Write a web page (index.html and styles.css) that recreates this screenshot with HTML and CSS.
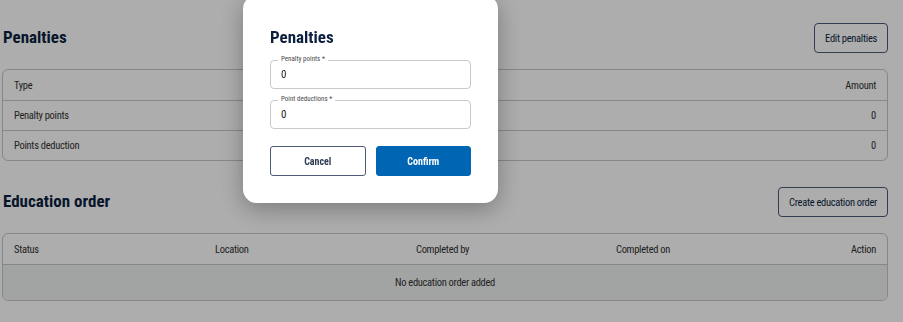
FILE: index.html
```html
<!DOCTYPE html>
<html lang="en">
<head>
    <meta charset="UTF-8">
    <meta name="viewport" content="width=device-width,initial-scale=1.0">
    <title>Penalties</title>
    <link rel="stylesheet" href="styles.css">
</head>
<body>
    <div class="page">

        <div class="section-head">
            <h2>Penalties</h2>
            <button class="btn-outline">Edit penalties</button>
        </div>
        <div class="table">
            <div class="row head penalty-row">
                <span>Type</span>
                <span class="right">Amount</span>
            </div>
            <div class="row penalty-row">
                <span>Penalty points</span>
                <span class="right">0</span>
            </div>
            <div class="row penalty-row">
                <span>Points deduction</span>
                <span class="right">0</span>
            </div>
        </div>

        <div class="section-head second">
            <h2>Education order</h2>
            <button class="btn-outline">Create education order</button>
        </div>
        <div class="table">
            <div class="row head edu-row">
                <span>Status</span>
                <span>Location</span>
                <span>Completed by</span>
                <span>Completed on</span>
                <span class="right">Action</span>
            </div>
            <div class="row empty">No education order added</div>
        </div>
    </div>

    <div class="backdrop"></div>

    <div class="modal">
        <h3>Penalties</h3>
        <div class="field">
            <label>Penalty points *</label>
            <input type="text" value="0">
        </div>
        <div class="field">
            <label>Point deductions *</label>
            <input type="text" value="0">
        </div>
        <div class="modal-actions">
            <button class="btn-cancel">Cancel</button>
            <button class="btn-confirm">Confirm</button>
        </div>
    </div>
</body>
</html>
```

FILE: styles.css
```css
body{
    margin:0;
    background:#ffffff;
    font-family:"Liberation Sans Narrow","Roboto Condensed",Roboto,sans-serif;
    color:#333;
}

.page{
    padding:23px 15px 0 2px;
}

.section-head{
    display:flex;
    justify-content:space-between;
    align-items:center;
    height:30px;
    margin-bottom:16px;
}

.section-head.second{
    margin-top:26px;
}

h2{
    margin:-3px 0 0 1px;
    font-size:17px;
    font-weight:bold;
    color:#0c1f3f;
}

.btn-outline{
    height:30px;
    padding:0 10px;
    background:#ffffff;
    border:1px solid #4b5b78;
    border-radius:4px;
    font-family:inherit;
    font-size:10.5px;
    letter-spacing:-0.3px;
    color:#0c1f3f;
}

.table{
    border:1px solid #c8c8c8;
    border-radius:6px;
    overflow:hidden;
}

.row{
    box-sizing:border-box;
    height:30px;
    padding:0 11px;
    font-size:10.5px;
    letter-spacing:-0.3px;
    color:#333333;
    align-items:center;
    border-top:1px solid #c8c8c8;
}

.row.head{
    border-top:none;
}

.penalty-row{
    display:flex;
    justify-content:space-between;
}

.edu-row{
    display:grid;
    grid-template-columns:201px 201px 200px 1fr auto;
}

.right{
    text-align:right;
}

.row.empty{
    display:flex;
    justify-content:center;
    height:36px;
    background:#eff2f2;
}

.backdrop{
    position:fixed;
    inset:0;
    background:rgba(0,0,0,0.32);
}

.modal{
    position:fixed;
    left:243px;
    top:-5px;
    width:201px;
    padding:32px 27px 27px 27px;
    background:#ffffff;
    border-radius:14px;
    box-shadow:0 6px 24px rgba(0,0,0,0.3);
}

.modal h3{
    margin:0 0 13px 0;
    font-size:17px;
    font-weight:bold;
    color:#0c1f3f;
}

.field{
    position:relative;
    margin-bottom:11px;
}

.field label{
    position:absolute;
    left:8px;
    top:-5px;
    padding:0 3px;
    background:#ffffff;
    font-size:7px;
    color:#4a4a4a;
}

.field input{
    box-sizing:border-box;
    width:100%;
    height:29px;
    padding:0 10px;
    border:1px solid #c9c9c9;
    border-radius:4px;
    font-family:inherit;
    font-size:11px;
    color:#222;
    outline:none;
}

.modal-actions{
    display:flex;
    gap:10px;
    margin-top:17px;
}

.modal-actions button{
    flex:1;
    height:30px;
    border-radius:3px;
    font-family:inherit;
    font-size:10px;
    font-weight:bold;
}

.btn-cancel{
    background:#ffffff;
    border:1px solid #4b5b78;
    color:#2c3a52;
}

.btn-confirm{
    background:#0066b3;
    border:1px solid #0066b3;
    color:#ffffff;
}
```
